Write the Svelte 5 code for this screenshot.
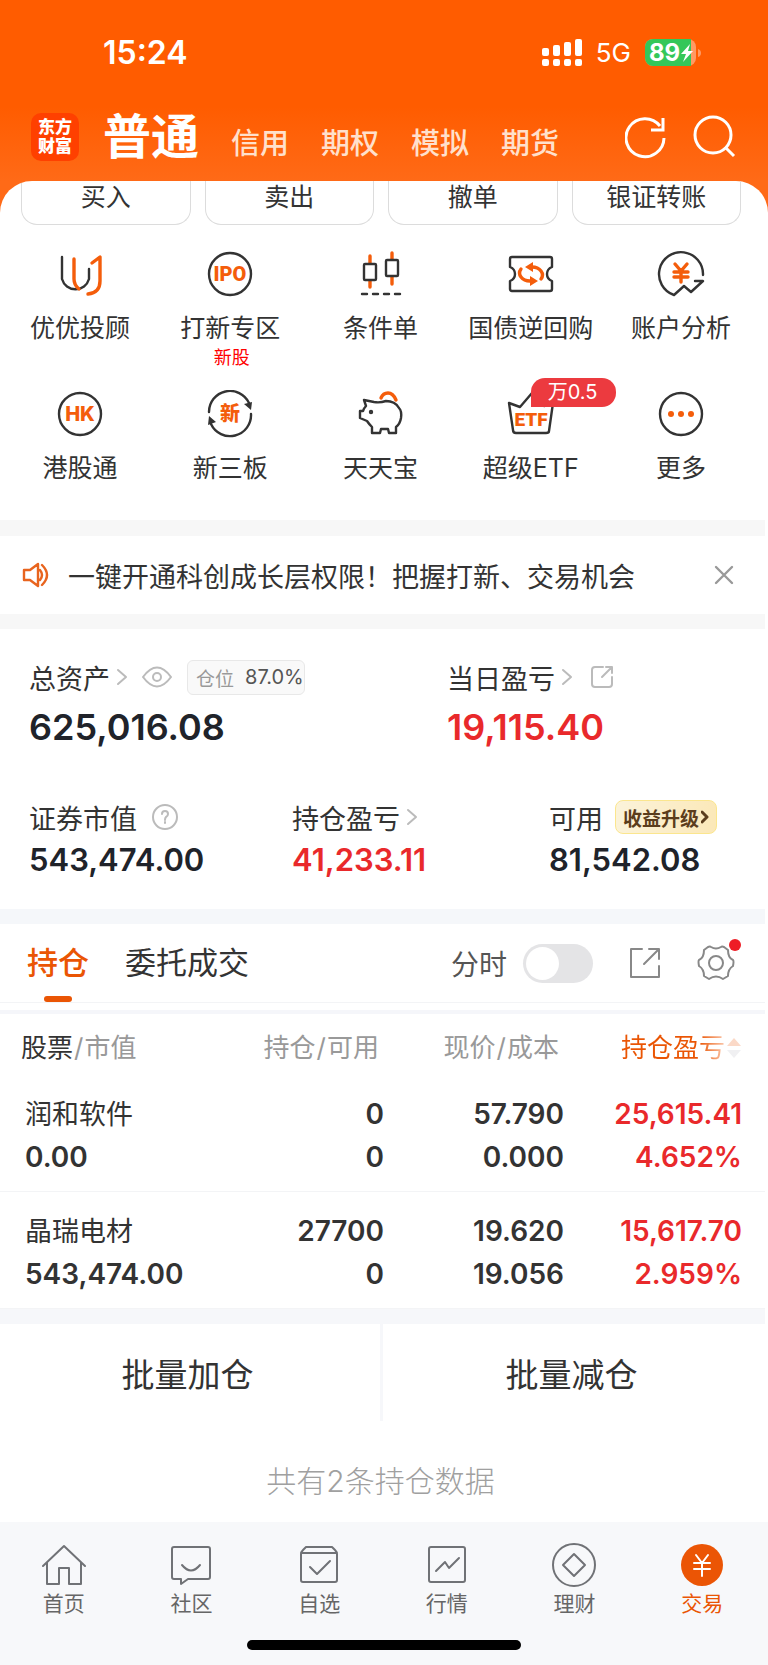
<script>
    let accounts = ['信用', '期权', '模拟', '期货'];
    let actions = ['买入', '卖出', '撤单', '银证转账'];
    let services = [
        { icon: 'uu', name: '优优投顾' },
        { icon: 'ipo', name: '打新专区', note: '新股' },
        { icon: 'cond', name: '条件单' },
        { icon: 'bond', name: '国债逆回购' },
        { icon: 'account', name: '账户分析' },
        { icon: 'hk', name: '港股通' },
        { icon: 'xin', name: '新三板' },
        { icon: 'pig', name: '天天宝' },
        { icon: 'etf', name: '超级ETF', badge: '万0.5' },
        { icon: 'more', name: '更多' }
    ];
    let holdings = [
        { name: '润和软件', value: '0.00', qty: '0', usable: '0', price: '57.790', cost: '0.000', profit: '25,615.41', rate: '4.652%' },
        { name: '晶瑞电材', value: '543,474.00', qty: '27700', usable: '0', price: '19.620', cost: '19.056', profit: '15,617.70', rate: '2.959%' }
    ];
    let navItems = [
        { icon: 'home', name: '首页' },
        { icon: 'chat', name: '社区' },
        { icon: 'pick', name: '自选' },
        { icon: 'market', name: '行情' },
        { icon: 'money', name: '理财' },
        { icon: 'trade', name: '交易' }
    ];

    let tab = $state('持仓');
    let minuteChart = $state(false);
    let showNotice = $state(true);
</script>

{#snippet chevron()}
    <svg class="chevron" width="12" height="18" viewBox="0 0 12 18"><path d="M2 2l8 7-8 7" /></svg>
{/snippet}

<div class="page">
    <div class="status">
        <span class="time">15:24</span>
        <div class="status-right">
            <svg width="40" height="28" viewBox="0 0 40 28">
                <g fill="#fff">
                    <rect x="0" y="9" width="7" height="8" rx="2" /><rect x="11" y="6" width="7" height="11" rx="2" />
                    <rect x="22" y="3" width="7" height="14" rx="2" /><rect x="33" y="0" width="7" height="17" rx="2" />
                    <rect x="0" y="20" width="7" height="7" rx="2" /><rect x="11" y="20" width="7" height="7" rx="2" />
                    <rect x="22" y="20" width="7" height="7" rx="2" /><rect x="33" y="20" width="7" height="7" rx="2" />
                </g>
            </svg>
            <span class="net">5G</span>
            <svg width="56" height="28" viewBox="0 0 56 28">
                <rect x="0" y="0" width="51" height="27" rx="8" fill="#ff9a63" />
                <path d="M8 0h38v27H8a8 8 0 0 1-8-8V8a8 8 0 0 1 8-8z" fill="#34c759" />
                <path d="M53 10q3 1 3 4t-3 4z" fill="#ff9a63" />
                <text x="4" y="22" font-size="24" font-weight="700" fill="#fff">89</text>
                <path d="M45 5L36 15h5l-3 8 10-11h-5z" fill="#fff" />
            </svg>
        </div>
    </div>

    <header>
        <div class="logo"><span>东方</span><span>财富</span></div>
        <nav class="accounts">
            <button class="current">普通</button>
            {#each accounts as a}
                <button>{a}</button>
            {/each}
        </nav>
        <button class="head-icon" aria-label="刷新">
            <svg width="44" height="44" viewBox="0 0 44 44"><path d="M39 23a19 19 0 1 1-4-12M38 3v12H26" /></svg>
        </button>
        <button class="head-icon" aria-label="搜索">
            <svg width="44" height="44" viewBox="0 0 44 44"><circle cx="20" cy="20" r="18" /><path d="M32 32l9 9" /></svg>
        </button>
    </header>

    <div class="sheet-wrap">
        <section class="sheet">
            <div class="actions">
                {#each actions as a}
                    <button>{a}</button>
                {/each}
            </div>
            <div class="services">
                {#each services as s}
                    <a href="#{s.icon}" class="service">
                        <svg width="48" height="48" viewBox="0 0 48 48" class="line">
                            {#if s.icon === 'uu'}
                                <path d="M6 7v22a14 14 0 0 0 27 0V19" />
                                <path class="o" d="M18 9v20q0 6 5 10M36 13l8-6v24q0 12-12 13" />
                            {:else if s.icon === 'ipo'}
                                <circle cx="24" cy="24" r="21" /><text class="narrow" x="24" y="31" font-size="20">IPO</text>
                            {:else if s.icon === 'cond'}
                                <path class="o" d="M14 6v7M14 31v6M36 3v6M36 27v7" />
                                <rect x="8" y="14" width="12" height="16" rx="1" /><rect x="30" y="10" width="12" height="16" rx="1" />
                                <path d="M6 44h40" stroke-dasharray="5 6" />
                            {:else if s.icon === 'bond'}
                                <path d="M5 7h38q2 0 2 2v8q-5 2-5 7t5 7v8q0 2-2 2H5q-2 0-2-2v-8q5-2 5-7t-5-7V9q0-2 2-2z" />
                                <path class="o" d="M14 19q-3 4 0 8 3 4 9 4M34 29q3-4 0-8-3-4-9-4" />
                                <path fill="#f45d0b" stroke="none" d="M26 12v10l-8-5zM23 26v10l8-5z" />
                            {:else if s.icon === 'account'}
                                <path d="M46 25A22 22 0 1 0 17 45l10-9 7 6 12-11h-8" />
                                <path class="o" d="M18 14l6 7 6-7M17 22h14M17 27h14M24 22v10" />
                            {:else if s.icon === 'hk'}
                                <circle cx="24" cy="24" r="21" /><text x="24" y="31" font-size="20">HK</text>
                            {:else if s.icon === 'xin'}
                                <path d="M3 22a21 21 0 0 1 40-9M45 24a21 21 0 0 1-40 10" />
                                <path fill="#333" stroke="none" d="M38 14l8-2-1 8zM10 32l-8 3 1-9z" />
                                <text x="24" y="31" font-size="20">新</text>
                            {:else if s.icon === 'pig'}
                                <path class="o" d="M25 8q2-5 7-5t8 7" />
                                <path d="M10 16l-2-6 10 2q6 1 12-1 9 0 13 7 3 3 2 10-1 6-5 9v6h-7l-1-4h-7l-1 4h-8v-6q-3-3-5-6l-7-3v-7h3q1-3 3-5z" />
                                <circle cx="15" cy="22" r="1" />
                            {:else if s.icon === 'etf'}
                                <path d="M2 13l11 4L25 3l12 13 9-3-4 28q0 2-3 2H9q-3 0-3-3z" />
                                <text class="narrow" x="24" y="36" font-size="19">ETF</text>
                            {:else}
                                <circle cx="24" cy="24" r="21" />
                                <g fill="#f45d0b" stroke="none"><circle cx="14" cy="24" r="3" /><circle cx="24" cy="24" r="3" /><circle cx="34" cy="24" r="3" /></g>
                            {/if}
                        </svg>
                        <span>{s.name}</span>
                        {#if s.note}<small>{s.note}</small>{/if}
                        {#if s.badge}<em>{s.badge}</em>{/if}
                    </a>
                {/each}
            </div>
        </section>
    </div>

    <main>
        {#if showNotice}
            <div class="notice">
                <svg width="28" height="26" viewBox="0 0 28 26"><path d="M2 8v10h6l8 6V2L8 8zM18 8q4 5 0 10M20 3q10 10 0 20" /></svg>
                <p>一键开通科创成长层权限！把握打新、交易机会</p>
                <button aria-label="关闭" onclick={() => (showNotice = false)}>
                    <svg width="20" height="20" viewBox="0 0 20 20"><path d="M2 2l16 16M18 2L2 18" /></svg>
                </button>
            </div>
        {/if}

        <section class="assets">
            <div class="top-row">
                <div>
                    <div class="label">
                        总资产{@render chevron()}
                        <svg class="eye" width="30" height="22" viewBox="0 0 30 22"><path d="M1 11q14-19 28 0-14 19-28 0z" /><circle cx="15" cy="11" r="4" /></svg>
                        <span class="ratio"><i>仓位</i>87.0%</span>
                    </div>
                    <strong>625,016.08</strong>
                </div>
                <div>
                    <div class="label">
                        当日盈亏{@render chevron()}
                        <svg class="share" width="24" height="24" viewBox="0 0 24 24"><path d="M13 2H5Q2 2 2 5v14q0 3 3 3h14q3 0 3-3v-7M16 2h6v6M21 3l-9 9" /></svg>
                    </div>
                    <strong class="red">19,115.40</strong>
                </div>
            </div>
            <div class="sub-row">
                <div>
                    <div class="label">
                        证券市值
                        <svg class="help" width="26" height="26" viewBox="0 0 26 26"><circle cx="13" cy="13" r="12" /><path d="M10 10q0-3 3-3t3 3q0 2-2 3-1 1-1 3M13 18v1" /></svg>
                    </div>
                    <strong>543,474.00</strong>
                </div>
                <div>
                    <div class="label">持仓盈亏{@render chevron()}</div>
                    <strong class="red">41,233.11</strong>
                </div>
                <div>
                    <div class="label">
                        可用
                        <button class="upgrade">收益升级<svg width="8" height="14" viewBox="0 0 8 14"><path d="M1 2l5 5-5 5" /></svg></button>
                    </div>
                    <strong>81,542.08</strong>
                </div>
            </div>
        </section>

        <div class="tabs">
            <button class:active={tab === '持仓'} onclick={() => (tab = '持仓')}>持仓</button>
            <button class:active={tab === '委托成交'} onclick={() => (tab = '委托成交')}>委托成交</button>
            <label>分时<input type="checkbox" bind:checked={minuteChart} /></label>
            <button class="tool" aria-label="分享">
                <svg width="32" height="32" viewBox="0 0 32 32"><path d="M13 2H2v28h28V19M20 2h10v10M29 3L15 17" /></svg>
            </button>
            <button class="tool gear" aria-label="设置">
                <svg width="38" height="38" viewBox="0 0 38 38">
                    <path d="M11 3q2-1 3 0 5 3 10 0 1-1 3 0l4 3q0 8 5 10 1 1 0 6-5 3-5 10l-5 3q-7-5-14 0l-5-3q0-7-5-10-1-5 0-6 5-2 5-10z" />
                    <circle cx="19" cy="19" r="7" />
                </svg>
            </button>
        </div>

        <table>
            <thead>
                <tr>
                    <th><b>股票</b><i>/</i>市值</th>
                    <th>持仓<i>/</i>可用</th>
                    <th>现价<i>/</i>成本</th>
                    <th class="sorted"><span>持仓盈亏</span><svg width="14" height="22" viewBox="0 0 14 22"><path d="M7 1l7 8H0z" fill="#fbd9c7" /><path d="M7 21l7-8H0z" fill="#f0f0f2" /></svg></th>
                </tr>
            </thead>
            <tbody>
                {#each holdings as h}
                    <tr>
                        <td><div class="name">{h.name}</div><div>{h.value}</div></td>
                        <td><div>{h.qty}</div><div>{h.usable}</div></td>
                        <td><div>{h.price}</div><div>{h.cost}</div></td>
                        <td class="red"><div>{h.profit}</div><div>{h.rate}</div></td>
                    </tr>
                {/each}
            </tbody>
        </table>

        <div class="batch">
            <button>批量加仓</button>
            <button>批量减仓</button>
        </div>
        <p class="total">共有2条持仓数据</p>
    </main>

    <footer>
        <nav>
            {#each navItems as n}
                <a href="#{n.icon}" class:on={n.icon === 'trade'}>
                    <svg width="44" height="44" viewBox="0 0 44 44">
                        {#if n.icon === 'home'}
                            <path d="M1 23L22 3l21 20M5 20v21h12V25h10v16h12V20" />
                        {:else if n.icon === 'chat'}
                            <path d="M5 4h34q2 0 2 2v28q0 2-2 2H19l-7 5v-5H5q-2 0-2-2V6q0-2 2-2zM13 22q9 11 18 0" />
                        {:else if n.icon === 'pick'}
                            <path d="M4 11q0-2 2-4l3-3h26l3 3q2 2 2 4v26q0 2-2 2H6q-2 0-2-2zM4 10h36M13 24l7 7 13-13" />
                        {:else if n.icon === 'market'}
                            <path d="M6 4h32q2 0 2 2v31q0 2-2 2H6q-2 0-2-2V6q0-2 2-2zM11 28l9-9 4 6 10-10" />
                        {:else if n.icon === 'money'}
                            <circle cx="22" cy="22" r="21" /><path d="M22 11l11 11-11 11-11-11z" />
                        {:else}
                            <circle cx="22" cy="22" r="21" fill="#eb5505" stroke="none" />
                            <path stroke="#fff" d="M16 12l6 8 6-8M14 20h16M14 26h16M22 20v13" />
                        {/if}
                    </svg>
                    {n.name}
                </a>
            {/each}
        </nav>
        <div class="indicator"></div>
    </footer>
</div>

<style>
    :global(body) {
        margin: 0;
        background: #fff;
        color: #333;
        font-family: Inter, 'Noto Sans CJK SC', sans-serif;
    }

    button {
        padding: 0;
        border: none;
        background: none;
        font: inherit;
        color: inherit;
    }

    a {
        color: inherit;
        text-decoration: none;
    }

    p {
        margin: 0;
    }

    svg {
        display: block;
        flex: none;
        fill: none;
        stroke-linecap: round;
        stroke-linejoin: round;
    }

    /* Status bar and header */
    .status {
        display: flex;
        justify-content: space-between;
        align-items: center;
        height: 107px;
        padding: 0 67px 2px 103px;
        box-sizing: border-box;
        background: #ff5c00;
        color: #fff;
    }

    .time {
        font-size: 32px;
        font-weight: 600;
    }

    .status-right {
        display: flex;
        align-items: center;
        gap: 14px;
    }

    .net {
        font-size: 26px;
    }

    header {
        display: flex;
        align-items: center;
        height: 74px;
        padding: 0 31px 14px;
        box-sizing: border-box;
        background: linear-gradient(#ff5c00, #ff6a17);
        color: #fff;
    }

    .logo {
        display: flex;
        flex-direction: column;
        justify-content: center;
        align-items: center;
        width: 48px;
        height: 48px;
        margin-right: 24px;
        border-radius: 10px;
        background: #ff4000;
        font-size: 17px;
        font-weight: 900;
        line-height: 19px;
    }

    .accounts {
        display: flex;
        flex: 1;
        align-items: baseline;
        gap: 32px;
        padding-top: 7px;
        font-size: 29px;
        font-weight: 500;
        line-height: 60px;
        color: #ffe0cc;
    }

    .current {
        font-size: 48px;
        font-weight: 700;
        color: #fff;
    }

    .head-icon {
        margin-left: 24px;
    }

    .head-icon svg {
        stroke: #fff;
        stroke-width: 3;
        stroke-linecap: butt;
        stroke-linejoin: miter;
    }

    .sheet-wrap {
        background: #ff6a17;
    }

    .sheet {
        border-radius: 32px 32px 0 0;
        background: #fff;
        overflow: hidden;
    }

    .actions {
        display: grid;
        grid-template-columns: repeat(4, 1fr);
        gap: 14px;
        padding: 0 27px 0 21px;
    }

    .actions button {
        height: 44px;
        padding-bottom: 12px;
        border: 1px solid #dcdcdc;
        border-top: none;
        border-radius: 0 0 16px 16px;
        font-size: 25px;
        line-height: 32px;
    }

    .services {
        display: grid;
        grid-template-columns: repeat(5, 1fr);
        row-gap: 18px;
        padding: 25px 12px 8px 5px;
    }

    .service {
        position: relative;
        display: flex;
        flex-direction: column;
        align-items: center;
        height: 122px;
        font-size: 25px;
        white-space: nowrap;
    }

    .service span {
        margin-top: 11px;
        line-height: 38px;
    }

    .service small {
        padding-left: 3px;
        font-size: 18px;
        line-height: 22px;
        color: #f00;
    }

    .service em {
        position: absolute;
        top: -12px;
        left: 50%;
        padding: 0 19px 0 17px;
        border-radius: 14px 14px 14px 0;
        background: #ec3a3f;
        font-size: 20px;
        font-style: normal;
        line-height: 29px;
        color: #fff;
    }

    .line {
        stroke: #333;
        stroke-width: 2.4;
    }

    .line text {
        fill: #f45d0b;
        stroke: none;
        font-weight: 800;
        text-anchor: middle;
    }

    .line .narrow {
        font-family: Roboto, sans-serif;
        font-weight: 900;
    }

    .o {
        stroke: #f45d0b;
        stroke-width: 3.4;
    }

    /* The scrolling column stops short of the right edge */
    main {
        margin-right: 3px;
    }

    .notice {
        display: flex;
        align-items: center;
        height: 78px;
        padding: 0 31px 0 22px;
        border-top: 16px solid #f7f7f7;
        border-bottom: 15px solid #f7f7f7;
        font-size: 27px;
    }

    .notice p {
        flex: 1;
        margin-left: 18px;
    }

    .notice svg {
        stroke: #e8641e;
        stroke-width: 2.4;
    }

    .notice button svg {
        stroke: #999;
    }

    .assets {
        padding: 28px 29px 27px;
        border-bottom: 15px solid #f5f7fa;
    }

    .label {
        display: flex;
        align-items: center;
        height: 40px;
        font-size: 27px;
        white-space: nowrap;
    }

    .label svg {
        stroke: #bbb;
        stroke-width: 2;
    }

    .label .chevron {
        margin-left: 6px;
    }

    .label .eye {
        margin-left: 14px;
    }

    .label .share {
        margin-left: 17px;
    }

    .label .help {
        margin-left: 15px;
    }

    .ratio {
        display: flex;
        align-items: center;
        margin-left: 15px;
        padding-left: 8px;
        height: 33px;
        border: 1px solid #e8e8e8;
        border-radius: 6px;
        background: #f9f9f9;
        font-size: 20px;
        color: #555;
    }

    .ratio i {
        margin-right: 11px;
        font-size: 19px;
        font-style: normal;
        color: #999;
    }

    strong {
        display: block;
        font-weight: 600;
        color: #20232a;
    }

    .top-row {
        display: grid;
        grid-template-columns: 418px 1fr;
    }

    .top-row strong {
        font-size: 36px;
        line-height: 60px;
    }

    .sub-row {
        display: grid;
        grid-template-columns: 263px 257px 1fr;
        margin-top: 40px;
    }

    .sub-row strong {
        font-size: 31px;
        line-height: 45px;
    }

    strong.red,
    .red {
        color: #e9292b;
    }

    .upgrade {
        display: flex;
        align-items: center;
        gap: 2px;
        height: 34px;
        margin-left: 12px;
        padding: 0 7px;
        border: 1px solid #fbe68e;
        border-radius: 8px;
        background: linear-gradient(100deg, #fbf3da, #fbe8b8);
        font-size: 19px;
        font-weight: 700;
        color: #5b3d1c;
    }

    .label .upgrade svg {
        stroke: #5b3d1c;
        stroke-width: 3;
    }

    /* Holdings */
    .tabs {
        display: flex;
        align-items: center;
        height: 78px;
        padding: 0 30px 0 27px;
        border-bottom: 1px solid #f3f4f6;
        font-size: 31px;
    }

    .tabs button {
        position: relative;
        margin-right: 36px;
        line-height: 78px;
    }

    .tabs .active {
        font-weight: 500;
        color: #ea5504;
    }

    .tabs .active::after {
        content: '';
        position: absolute;
        left: 50%;
        bottom: 0;
        width: 28px;
        height: 6px;
        margin-left: -14px;
        border-radius: 3px;
        background: #ea5504;
    }

    .tabs label {
        display: flex;
        align-items: center;
        gap: 16px;
        margin-left: auto;
        font-size: 28px;
        color: #555;
    }

    .tabs input {
        appearance: none;
        width: 70px;
        height: 39px;
        margin: 0;
        padding: 3px;
        border-radius: 20px;
        background: #e4e4e6;
    }

    .tabs input::before {
        content: '';
        display: block;
        width: 33px;
        height: 33px;
        border-radius: 50%;
        background: #fff;
    }

    .tabs input:checked {
        background: #ea5504;
    }

    .tabs input:checked::before {
        margin-left: 31px;
    }

    .tabs .tool {
        margin: 0 0 0 36px;
    }

    .tool svg {
        stroke: #888;
        stroke-width: 2;
    }

    .gear::after {
        content: '';
        position: absolute;
        top: -5px;
        right: -6px;
        width: 12px;
        height: 12px;
        border-radius: 50%;
        background: #ee1c25;
    }

    table {
        width: 100%;
        margin-top: 7px;
        border-top: 4px solid #f5f6fa;
        border-bottom: 15px solid #f6f7fa;
        border-spacing: 0;
        table-layout: fixed;
    }

    th {
        height: 61px;
        padding: 2px 5px 0 0;
        font-size: 26px;
        font-weight: 400;
        text-align: right;
        white-space: nowrap;
        color: #999;
        box-sizing: border-box;
    }

    th:first-child {
        padding-left: 21px;
        text-align: left;
    }

    th b {
        font-weight: 400;
        color: #333;
    }

    th i {
        padding: 0 1px;
        font-style: normal;
    }

    th:nth-child(2),
    th:nth-child(3) {
        width: 180px;
    }

    th:first-child {
        width: 204px;
    }

    th.sorted {
        padding-right: 24px;
    }

    .sorted span {
        background: linear-gradient(90deg, #ea5504 75%, #fbc9ae);
        background-clip: text;
        color: transparent;
    }

    .sorted svg {
        display: inline-block;
        margin-left: 2px;
        vertical-align: -2px;
    }

    td {
        padding: 18px 0 12px;
        border-bottom: 1px solid #f3f4f6;
        font-size: 28px;
        font-weight: 600;
        line-height: 43px;
        text-align: right;
    }

    td:first-child {
        padding-left: 25px;
        text-align: left;
    }

    td:last-child {
        padding-right: 23px;
    }

    .name {
        font-size: 27px;
        font-weight: 400;
    }

    .batch {
        display: grid;
        grid-template-columns: 380fr 385fr;
    }

    .batch button {
        height: 97px;
        padding-right: 5px;
        font-size: 33px;
    }

    .batch button + button {
        border-left: 3px solid #f6f7fa;
    }

    .total {
        padding: 36px 4px 17px 0;
        font-size: 30px;
        font-weight: 300;
        line-height: 48px;
        text-align: center;
        color: #a0a0a0;
    }

    /* Bottom navigation */
    footer {
        padding: 21px 0 15px;
        background: #f7f8fa;
    }

    footer nav {
        display: grid;
        grid-template-columns: repeat(6, 1fr);
        padding-right: 2px;
    }

    footer a {
        display: flex;
        flex-direction: column;
        align-items: center;
        font-size: 21px;
        line-height: 34px;
        color: #666;
    }

    footer a svg {
        stroke: #707276;
        stroke-width: 2;
    }

    footer .on {
        color: #ea5504;
    }

    .indicator {
        width: 274px;
        height: 10px;
        margin: 19px auto 0;
        border-radius: 5px;
        background: #000;
    }
</style>
